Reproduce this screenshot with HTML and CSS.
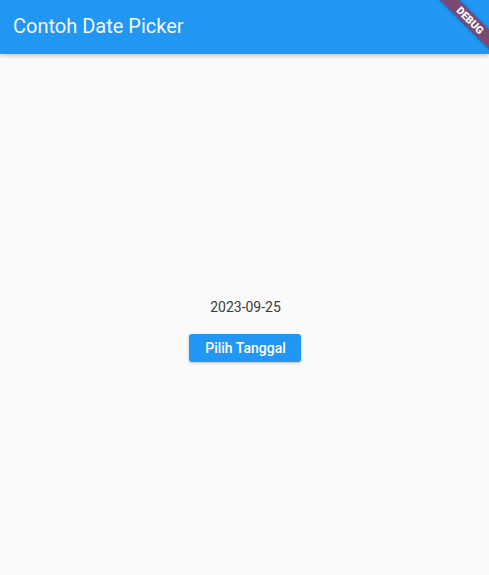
FILE: index.html
```html
<!DOCTYPE html>
<html lang="id">
<head>
<meta charset="utf-8">
<title>Contoh Date Picker</title>
<link rel="stylesheet" href="styles.css">
</head>
<body>
<div class="app">
  <header class="appbar">
    <h1 class="title">Contoh Date Picker</h1>
  </header>
  <main class="content">
    <div class="date">2023-09-25</div>
    <button class="btn" type="button">Pilih Tanggal</button>
  </main>
  <div class="banner"><span>DEBUG</span></div>
</div>
</body>
</html>
```
FILE: styles.css
```css
html, body {
  margin: 0;
  padding: 0;
  height: 100%;
}
body {
  font-family: Roboto, "Noto Sans", sans-serif;
  background: #fafafa;
  overflow: hidden;
}
.app {
  position: relative;
  display: flex;
  flex-direction: column;
  height: 575px;
  overflow: hidden;
}
.appbar {
  height: 54px;
  flex: 0 0 54px;
  background: #2196f3;
  display: flex;
  align-items: center;
  padding: 0 13px 2px;
  box-sizing: border-box;
  box-shadow: 0 2px 4px rgba(0,0,0,0.2);
  position: relative;
  z-index: 1;
}
.title {
  margin: 0;
  font-size: 20px;
  font-weight: 400;
  color: #f4f9ff;
  letter-spacing: 0;
}
.content {
  flex: 1;
  display: flex;
  flex-direction: column;
  align-items: center;
  justify-content: center;
  padding-top: 31px;
}
.date {
  font-size: 14px;
  line-height: 18px;
  color: #3a3a3a;
  padding-left: 2px;
}
.btn {
  margin-top: 18px;
  height: 28px;
  width: 112px;
  border: none;
  border-radius: 3px;
  background: #2196f3;
  color: #ffffff;
  font-family: Roboto, sans-serif;
  font-size: 14px;
  font-weight: 500;
  box-shadow: 0 1px 3px rgba(0,0,0,0.25);
  padding: 0 0 0 2px;
}
.banner {
  position: absolute;
  top: 0;
  right: 0;
  width: 80px;
  height: 80px;
  overflow: hidden;
  pointer-events: none;
  z-index: 2;
}
.banner span {
  position: absolute;
  width: 100px;
  height: 13px;
  line-height: 13px;
  left: 11px;
  top: 14px;
  transform: rotate(45deg);
  background: rgba(178, 28, 40, 0.64);
  box-shadow: 0 0 3px rgba(0,0,0,0.5);
  color: #fff;
  font-size: 10.5px;
  font-weight: 900;
  text-align: center;
}
```
